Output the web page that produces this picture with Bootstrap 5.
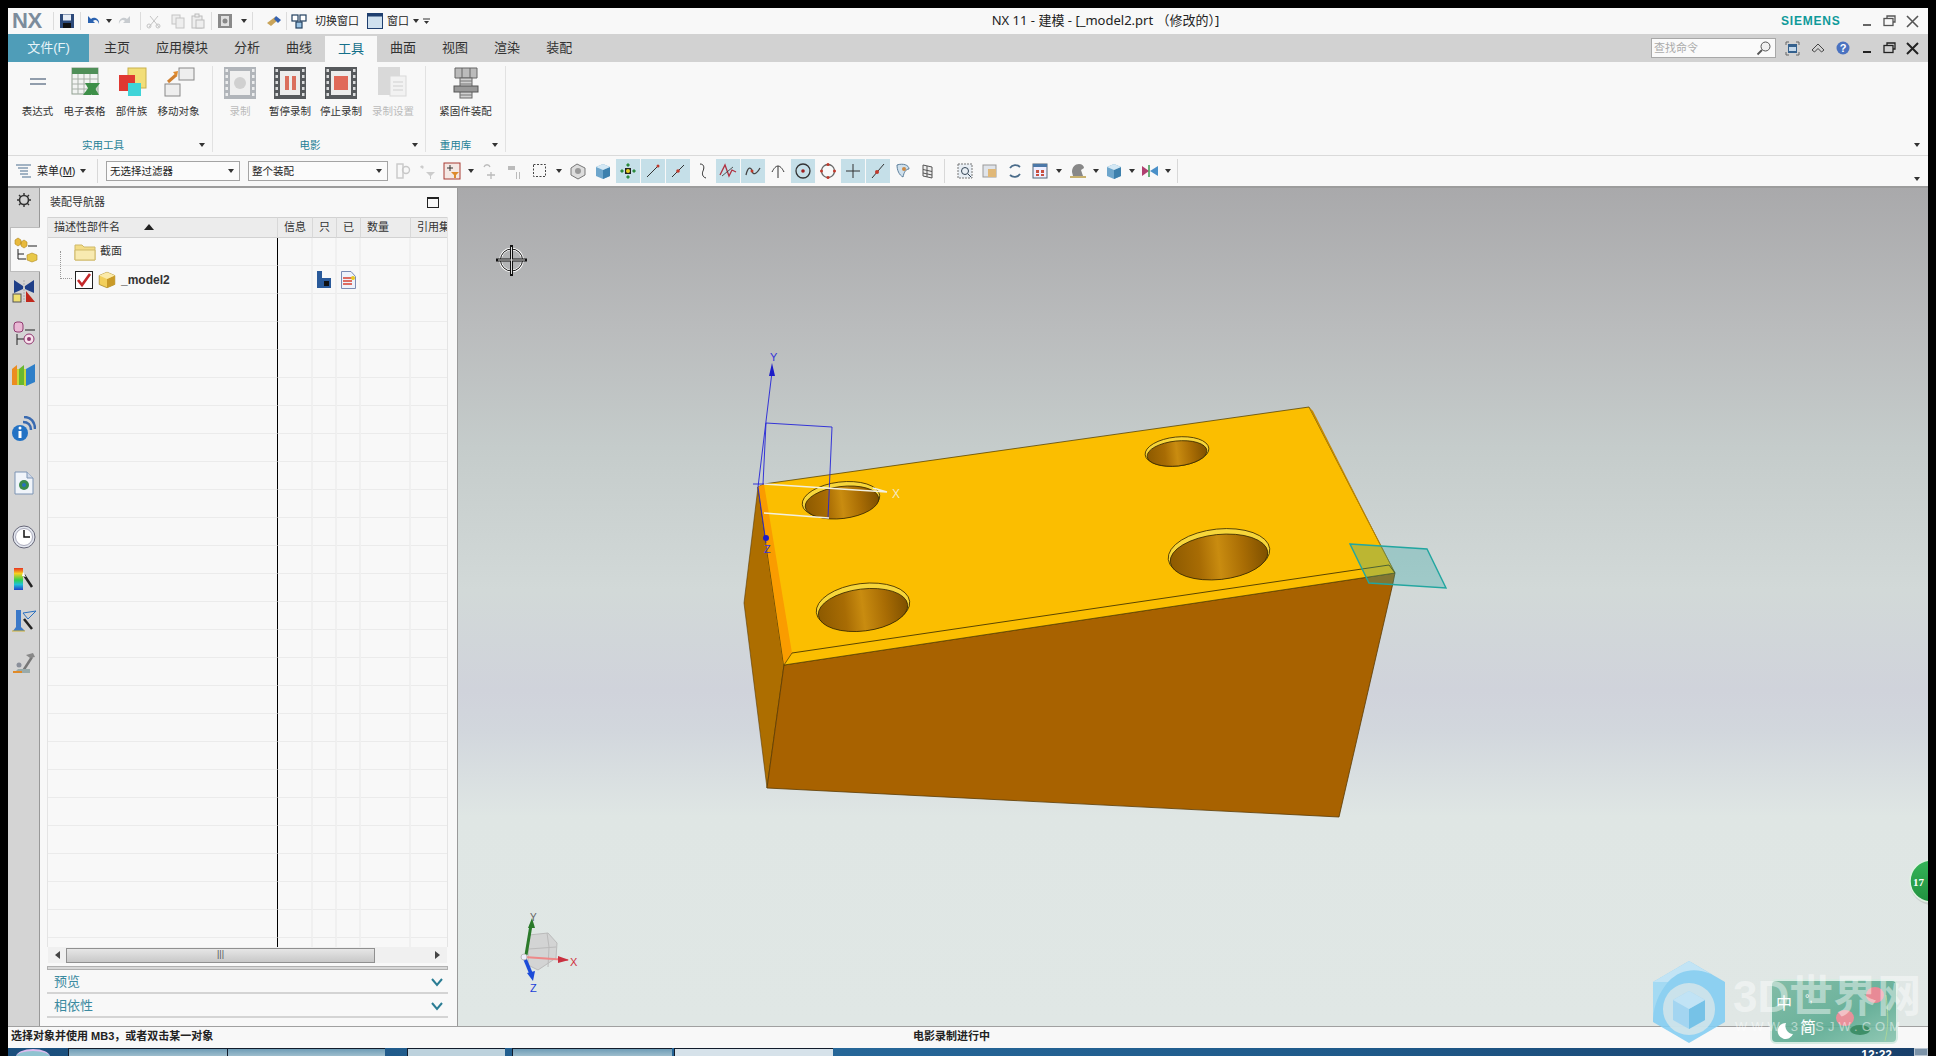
<!DOCTYPE html>
<html lang="zh">

<head>
    <meta charset="utf-8">
    <meta name="viewport" content="width=device-width, initial-scale=1">
    <title>NX 11 - 建模</title>

    <link href="https://cdn.jsdelivr.net/npm/bootstrap@5.3.3/dist/css/bootstrap.min.css" rel="stylesheet">
    <style>
        html, body { height: 1056px; overflow: hidden; }
        body { background: #000; padding: 8px 8px 0; font-family: "Liberation Sans", "Noto Sans CJK SC", sans-serif; font-size: 11px; color: #333; }
        svg { display: block; flex: none; }
        .nx-app { height: 1048px; position: relative; background: #f8f8f8; }

        /* title row */
        .nx-title { height: 26px; background: #f8f8f8; flex: none; }
        .nx-logo { font: bold 22px "Liberation Sans", sans-serif; color: #7c8c9c; margin-left: 4px; width: 36px; letter-spacing: -.5px; }
        .qa-sep { width: 1px; height: 18px; background: #dcdcdc; margin: 0 5px; flex: none; }
        .qa-text { font-size: 11px; color: #222; }
        .nx-caption { font-family: "Noto Sans", "Noto Sans CJK SC", sans-serif; font-size: 13px; color: #222; text-align: center; }
        .nx-brand { font: bold 12px "Liberation Sans", sans-serif; color: #0f9a9a; letter-spacing: .8px; width: 74px; }
        .win-btn { width: 23px; display: flex; justify-content: center; }

        /* ribbon tabs */
        .nx-tabs { height: 28px; background: #d2d2d2; flex: none; }
        .nx-file { width: 81px; background: #4f9db8; color: #e8f4f8; font-size: 13px; line-height: 28px; text-align: center; margin-right: 2px; }
        .nx-tab { padding: 0 13px; font-size: 13px; line-height: 28px; color: #333; }
        .nx-tab-on { background: #f8f8f8; color: #14708a; margin-top: 2px; line-height: 26px; }
        .nx-search { width: 125px; height: 20px; background: #fafafa; border: 1px solid #a8a8a8; color: #aaa; padding-left: 2px; line-height: 18px; }
        .tab-tool { width: 25px; display: flex; justify-content: center; }

        /* ribbon body */
        .nx-ribbon { height: 94px; background: #f8f8f8; border-bottom: 1px solid #dadada; flex: none; padding-left: 6px; padding-top: 4px; }
        .rb-group { height: 86px; border-right: 1px solid #e2e2e2; }
        .rb-g1 { width: 199px; }
        .rb-g2 { width: 213px; padding-left: 2px; }
        .rb-g3 { width: 80px; }
        .rb-items { height: 72px; }
        .rb-btn { width: 47px; text-align: center; color: #333; font-size: 10.5px; line-height: 14px; white-space: nowrap; }
        .rb-wide { width: 50px; }
        .rb-wide2 { width: 52px; }
        .rb-last { width: 79px; }
        .rb-btn svg { margin: 0 auto 4px; }
        .rb-off { color: #bbb; }
        .rb-label { color: #1d7f96; font-size: 10.5px; line-height: 14px; }
        .rb-caret { width: 20px; display: flex; justify-content: center; align-items: center; }
        .caret-dn { width: 0; height: 0; border-left: 3px solid transparent; border-right: 3px solid transparent; border-top: 4px solid #333; }

        /* selection bar */
        .nx-select { height: 32px; background: #f8f8f8; border-bottom: 2px solid #9c9c9c; flex: none; padding-left: 7px; }
        .sel-menu { width: 79px; font-size: 11px; color: #222; }
        .sel-box { height: 20px; background: #fbfbfb; border: 1px solid #a4a4a4; font-size: 10.5px; color: #222; padding: 0 5px 0 3px; line-height: 18px; }
        .sel-wide { width: 134px; margin-right: 8px; }
        .sel-wider { width: 140px; margin-right: 2px; }
        .tb { width: 24px; height: 24px; margin-right: 1px; display: flex; align-items: center; justify-content: center; flex: none; }
        .tb-on { background: #c5dfe8; }
        .tb-a { width: 12px; margin-right: 1px; display: flex; justify-content: center; flex: none; }
        .tb-tight { width: 10px; }
        .tb-sep { width: 1px; height: 24px; background: #d8d8d8; margin: 0 8px 0 3px; flex: none; }

        /* left resource bar */
        .nx-main { min-height: 0; }
        .res-bar { width: 32px; background: #d4d4d4; border-right: 1px solid #999; flex: none; padding-top: 4px; }
        .res-gear { margin-bottom: 19px; }
        .res-tab { height: 45px; background: #f8f8f8; margin: 0 -1px 0 2px; display: flex; align-items: center; justify-content: center; border: 1px solid #bcbcbc; border-right: 0; }
        .res-ico { display: flex; justify-content: center; align-items: center; height: 24px; margin-top: 18px; }
        .res-first { margin-top: 7px; }
        .res-far { margin-top: 30px; }

        /* navigator */
        .nav-panel { width: 418px; background: #f8f8f8; border-right: 1px solid #9a9a9a; flex: none; padding: 0 9px 0 7px; }
        .nav-head { height: 29px; font-size: 11px; color: #333; padding: 0 9px 0 3px; }
        .nav-wrap { height: 730px; border-left: 1px solid #e4e4e4; border-right: 1px solid #e4e4e4; overflow: hidden; flex: none; }
        .nav-tbl { width: 401px; table-layout: fixed; border-collapse: separate; border-spacing: 0; }
        .nav-tbl th { height: 21px; background: #ececec; font-weight: 400; font-size: 11px; color: #333; padding: 0 0 0 6px; border-top: 1px solid #d2d2d2; border-bottom: 1px solid #d2d2d2; border-right: 1px solid #d8d8d8; white-space: nowrap; overflow: hidden; }
        .nav-tbl td { height: 28px; padding: 0; border-bottom: 1px solid #ebebeb; border-right: 2px solid #f0f0f0; font-size: 11px; }
        .nav-tbl td.col-tree { border-right: 1px solid #000; }
        .sort-up { width: 0; height: 0; border-left: 5px solid transparent; border-right: 5px solid transparent; border-bottom: 6px solid #222; margin-left: 24px; display: inline-block; vertical-align: 1px; }
        .tree-row { padding-left: 26px; }
        .tree-root { padding-left: 27px; position: relative; font-size: 12px; }
        .tree-guide { position: absolute; left: 12px; top: -19px; width: 12px; height: 28px; border-left: 1px dotted #999; border-bottom: 1px dotted #999; }
        .hscroll { height: 16px; background: #f0f0f0; margin: 0 1px; padding: 0 6px; flex: none; }
        .hscroll-thumb { width: 309px; height: 15px; margin-left: 6px; border: 1px solid #909090; background: linear-gradient(#e6e6e6, #c8c8c8); text-align: center; line-height: 11px; color: #555; font-size: 9px; }
        .nav-rule { height: 4px; background: #d8d8d8; border: 1px solid #b0b0b0; margin-top: 3px; flex: none; }
        .nav-fold { height: 24px; border-bottom: 2px solid #d4d4d4; color: #3b8aa0; font-size: 13px; padding: 2px 5px 0 7px; flex: none; }

        .nx-view { min-width: 0; background: linear-gradient(#a9a9ab 0, #babcbd 17%, #c5cccb 31%, #d2d9d8 48%, #d0d3db 60%, #d2d7dd 65%, #dfe6e4 75%, #e0e7e5 100%); }

        /* status */
        .nx-status { height: 22px; border-top: 1px solid #a0a0a0; background: #f8f8f8; flex: none; font-size: 11px; color: #222; line-height: 19px; padding-left: 3px; }
        .status-main { width: 902px; font-weight: 700; }
        .status-note { font-weight: 700; }

        /* taskbar cut by the window edge */
        .nx-taskbar { height: 8px; background: linear-gradient(90deg, #1a4e7c, #27689a 40%, #1f5a8a 70%, #183f6a); flex: none; overflow: hidden; }
        .task-orb { width: 34px; height: 16px; border-radius: 50%; background: #8fc3d0; margin: 1px 18px 0 8px; flex: none; border-top: 2px solid #dbe; }
        .task-btn { height: 8px; border-top: 1px solid #111c2c; border-left: 1px solid #111c2c; background: linear-gradient(#6f9db6, #9dbdcd); flex: none; }
        .task-a { width: 159px; }
        .task-b { width: 158px; }
        .task-c { width: 98px; margin-left: 22px; background: #bdd2dd; }
        .task-d { width: 160px; margin-left: 7px; }
        .task-e { width: 159px; margin-left: 2px; background: #d6e2ea; }
        .task-clock { color: #fff; font-size: 12px; line-height: 14px; margin-left: auto; margin-right: 22px; font-weight: 700; }
        .task-show { width: 14px; background: #7c93a8; border: 1px solid #b8c4d0; flex: none; }

        .nx-overlay { position: absolute; left: 1632px; top: 842px; pointer-events: none; }
    </style>
</head>

<body>
    <svg width="0" height="0" class="position-absolute">
        <defs>
            <symbol id="film" viewBox="0 0 34 34">
                <rect x="1" y="1" width="32" height="32" fill="currentColor" />
                <g fill="#fff" fill-opacity=".8">
                    <rect x="2.500" y="3" width="2.500" height="3" /><rect x="2.500" y="9" width="2.500" height="3" /><rect x="2.500" y="15" width="2.500" height="3" /><rect x="2.500" y="21" width="2.500" height="3" /><rect x="2.500" y="27" width="2.500" height="3" />
                    <rect x="29" y="3" width="2.500" height="3" /><rect x="29" y="9" width="2.500" height="3" /><rect x="29" y="15" width="2.500" height="3" /><rect x="29" y="21" width="2.500" height="3" /><rect x="29" y="27" width="2.500" height="3" />
                </g>
                <rect x="7" y="5" width="20" height="24" fill="#e8e8e8" />
            </symbol>
            <symbol id="cube" viewBox="0 0 18 18">
                <path d="M2 5 9 2l7 3v8l-7 3-7-3z" fill="#f2cf5c" stroke="#a98a2c" stroke-width=".7" />
                <path d="M9 8v8l7-3V5z" fill="#c99a28" />
                <path d="M2 5l7 3 7-3-7-3z" fill="#fbeaa8" />
            </symbol>
            <symbol id="blue-cube" viewBox="0 0 18 18">
                <path d="M2 5 9 2l7 3v9l-7 3-7-3z" fill="#6ea6cc" />
                <path d="M9 8v9l7-3V5z" fill="#3d80ad" />
                <path d="M2 5l7 3 7-3-7-3z" fill="#d4e8f4" />
            </symbol>
            <linearGradient id="wall" x1="0" x2="1" y1="0" y2="0">
                <stop offset="0" stop-color="#8d5a00" /><stop offset=".3" stop-color="#a86c04" /><stop offset=".5" stop-color="#c98c10" /><stop offset=".75" stop-color="#a86c04" /><stop offset="1" stop-color="#7e5000" />
            </linearGradient>
        </defs>
    </svg>

    <div class="nx-app d-flex flex-column">
        <!-- title row -->
        <div class="nx-title d-flex align-items-center">
            <div class="nx-logo">NX</div>
            <div class="qa-sep"></div>
            <svg width="16" height="16" viewBox="0 0 16 16"><path d="M1 1h14v14H1z" fill="#2d4a7a" /><rect x="4" y="1.500" width="8" height="6" fill="#e8eef6" /><rect x="4" y="10" width="8" height="5" fill="#111" /></svg>
            <div class="qa-sep"></div>
            <svg width="16" height="16" viewBox="0 0 16 16"><path d="M2 3v7h7L7 8c2-2 5-1 6 3 1-5-5-8-8-5z" fill="#2a62b0" /></svg>
            <div class="caret-dn ms-1"></div>
            <svg class="ms-1" width="16" height="16" viewBox="0 0 16 16"><path d="M14 3v7H7l2-2C7 6 4 7 3 11c-1-5 5-8 8-5z" fill="#c8ccd0" /></svg>
            <div class="qa-sep ms-2"></div>
            <svg width="16" height="16" viewBox="0 0 16 16" fill="none" stroke="#c4c4c4"><path d="M3 14 12 3M13 14 4 3" /><circle cx="3" cy="13" r="2" /><circle cx="12" cy="13" r="2" /></svg>
            <svg class="ms-2" width="16" height="16" viewBox="0 0 16 16" fill="#eee" stroke="#c4c4c4"><rect x="2" y="2" width="8" height="9" /><rect x="6" y="5" width="8" height="10" /></svg>
            <svg class="ms-1" width="16" height="16" viewBox="0 0 16 16" fill="#eee" stroke="#bcbcbc"><rect x="2" y="3" width="10" height="12" /><rect x="5" y="1" width="4" height="3" /><rect x="6" y="7" width="8" height="8" /></svg>
            <div class="qa-sep"></div>
            <svg width="16" height="16" viewBox="0 0 16 16"><rect x="1" y="1" width="14" height="14" fill="#8a8a8a" /><rect x="4" y="3" width="8" height="10" fill="#e0e0e0" /><circle cx="8" cy="8" r="2.500" fill="#888" /></svg>
            <div class="caret-dn ms-2"></div>
            <div class="qa-sep"></div>
            <svg class="ms-2" width="16" height="16" viewBox="0 0 16 16"><path d="M1 10 9 4l3 3-7 6z" fill="#c9a45a" /><path d="M10 3l5 4-3 3-4-4z" fill="#3562b0" /></svg>
            <div class="qa-sep ms-1 me-1"></div>
            <svg width="16" height="16" viewBox="0 0 16 16" fill="#fff" stroke="#22405f" stroke-width="1.200"><rect x="1" y="2" width="6" height="6" /><rect x="9" y="2" width="6" height="6" /><rect x="5" y="9" width="6" height="6" fill="#9cc4e4" /></svg>
            <span class="qa-text ms-2">切换窗口</span>
            <svg class="ms-2" width="16" height="16" viewBox="0 0 16 16"><rect x=".5" y=".5" width="15" height="15" fill="#cfe0ee" stroke="#1f3f6f" /><rect x="1" y="1" width="14" height="2.500" fill="#1f3f6f" /></svg>
            <span class="qa-text ms-1">窗口</span>
            <div class="caret-dn ms-1"></div>
            <svg class="ms-1" width="7" height="7" viewBox="0 0 7 7"><path d="M0 1h7" stroke="#333" /><path d="M1 3h5L3.500 6z" fill="#333" /></svg>
            <div class="nx-caption flex-grow-1">NX 11 - 建模 - [_model2.prt （修改的）]</div>
            <div class="nx-brand">SIEMENS</div>
            <div class="win-btn"><svg width="12" height="12" viewBox="0 0 12 12"><rect x="2" y="9" width="8" height="2" fill="#666" /></svg></div>
            <div class="win-btn"><svg width="13" height="12" viewBox="0 0 13 12" fill="none" stroke="#555" stroke-width="1.300"><path d="M4 3V1h8v6h-2" /><rect x="1" y="3.500" width="9" height="7" /></svg></div>
            <div class="win-btn me-1"><svg width="13" height="13" viewBox="0 0 13 13" stroke="#555" stroke-width="1.600"><path d="M1 1l11 11M12 1 1 12" /></svg></div>
        </div>

        <!-- ribbon tabs -->
        <div class="nx-tabs d-flex">
            <div class="nx-file">文件(F)</div>
            <div class="nx-tab">主页</div>
            <div class="nx-tab">应用模块</div>
            <div class="nx-tab">分析</div>
            <div class="nx-tab">曲线</div>
            <div class="nx-tab nx-tab-on">工具</div>
            <div class="nx-tab">曲面</div>
            <div class="nx-tab">视图</div>
            <div class="nx-tab">渲染</div>
            <div class="nx-tab">装配</div>
            <div class="ms-auto d-flex align-items-center me-1">
                <div class="nx-search d-flex justify-content-between align-items-center">查找命令
                    <svg class="me-1" width="15" height="15" viewBox="0 0 15 15" fill="#f0f0f0" stroke="#555"><circle cx="9.500" cy="5.500" r="4.500" /><path d="M6 9 1.500 13.500" stroke-width="1.800" /></svg>
                </div>
                <div class="tab-tool ms-1"><svg width="15" height="15" viewBox="0 0 15 15"><path d="M1 4V1h3M11 1h3v3M14 11v3h-3M4 14H1v-3" fill="none" stroke="#666" /><rect x="3" y="3" width="9" height="9" fill="#34618e" /><rect x="4" y="6" width="7" height="4" fill="#c4d8ea" /></svg></div>
                <div class="tab-tool"><svg width="14" height="12" viewBox="0 0 14 12" fill="none" stroke="#444"><path d="M1 8l6-6 6 6-2.500 2L7 6.500 3.500 10z" /></svg></div>
                <div class="tab-tool"><svg width="14" height="14" viewBox="0 0 14 14"><circle cx="7" cy="7" r="6.500" fill="#4a72c0" /><text x="7" y="11" text-anchor="middle" font-family="Liberation Sans" font-weight="700" font-size="11" fill="#fff">?</text></svg></div>
                <div class="win-btn"><svg width="12" height="12" viewBox="0 0 12 12"><rect x="2" y="9" width="8" height="2" fill="#222" /></svg></div>
                <div class="win-btn"><svg width="13" height="12" viewBox="0 0 13 12" fill="none" stroke="#222" stroke-width="1.300"><path d="M4 3V1h8v6h-2" /><rect x="1" y="3.500" width="9" height="7" /></svg></div>
                <div class="win-btn"><svg width="13" height="13" viewBox="0 0 13 13" stroke="#222" stroke-width="2"><path d="M1 1l11 11M12 1 1 12" /></svg></div>
            </div>
        </div>

        <!-- ribbon -->
        <div class="nx-ribbon d-flex">
            <div class="rb-group rb-g1 d-flex flex-column">
                <div class="rb-items d-flex">
                    <div class="rb-btn">
                        <svg width="34" height="34" viewBox="0 0 34 34"><path d="M9 13h16M9 18h16" stroke="#6f7f92" stroke-width="1.400" /></svg>表达式
                    </div>
                    <div class="rb-btn">
                        <svg width="34" height="34" viewBox="0 0 34 34"><rect x="4" y="2" width="26" height="26" fill="#f2f4f2" stroke="#90a090" /><rect x="4" y="2" width="26" height="6" fill="#4f8f58" /><path d="M4 13h26M4 18h26M4 23h26M10 8v20M16 8v20M22 8v20" stroke="#a8b0a8" /><path d="M15 29l9-12h8l-9 12z" fill="#3d8f48" /><path d="M17 17h7l7 12h-7z" fill="#3d8f48" /></svg>电子表格
                    </div>
                    <div class="rb-btn">
                        <svg width="34" height="34" viewBox="0 0 34 34"><rect x="13" y="2" width="18" height="20" fill="#f2de78" stroke="#c8b04c" /><rect x="4" y="9" width="16" height="16" fill="#e03832" /><rect x="13" y="17" width="13" height="13" fill="#3fd4d8" /></svg>部件族
                    </div>
                    <div class="rb-btn">
                        <svg width="34" height="34" viewBox="0 0 34 34"><rect x="17" y="2" width="15" height="12" fill="#eee" stroke="#888" /><rect x="3" y="18" width="15" height="12" fill="#eee" stroke="#888" /><path d="M6 16l8-7" stroke="#d08030" stroke-width="3" /><path d="M11 6l5-1-1 6z" fill="#e08b2e" /></svg>移动对象
                    </div>
                </div>
                <div class="d-flex"><div class="rb-label flex-grow-1 text-center">实用工具</div><div class="rb-caret"><div class="caret-dn"></div></div></div>
            </div>
            <div class="rb-group rb-g2 d-flex flex-column">
                <div class="rb-items d-flex">
                    <div class="rb-btn rb-wide rb-off">
                        <svg class="text-secondary opacity-50" width="34" height="34"><use href="#film" /><circle cx="17" cy="17" r="6" fill="#aaa" /></svg>录制
                    </div>
                    <div class="rb-btn rb-wide">
                        <svg class="text-dark opacity-75" width="34" height="34"><use href="#film" /><rect x="12" y="10" width="4" height="14" fill="#d0402a" /><rect x="19" y="10" width="4" height="14" fill="#d0402a" /></svg>暂停录制
                    </div>
                    <div class="rb-btn rb-wide2">
                        <svg class="text-dark opacity-75" width="34" height="34"><use href="#film" /><rect x="10" y="10" width="14" height="14" fill="#d83a24" /></svg>停止录制
                    </div>
                    <div class="rb-btn rb-wide2 rb-off">
                        <svg class="text-secondary opacity-50" width="34" height="34"><rect x="2" y="1" width="22" height="28" fill="#bbb" /><rect x="14" y="10" width="16" height="20" fill="#eee" stroke="#bbb" /><path d="M17 16h10M17 20h10M17 24h10" stroke="#aaa" /></svg>录制设置
                    </div>
                </div>
                <div class="d-flex"><div class="rb-label flex-grow-1 text-center">电影</div><div class="rb-caret"><div class="caret-dn"></div></div></div>
            </div>
            <div class="rb-group rb-g3 d-flex flex-column">
                <div class="rb-items d-flex">
                    <div class="rb-btn rb-last">
                        <svg width="34" height="34" viewBox="0 0 34 34"><path d="M6 2h22v10H6z" fill="#bbb" stroke="#666" /><path d="M13 2v10M21 2v10" stroke="#666" /><rect x="11" y="12" width="12" height="20" fill="#d0d0d0" stroke="#666" /><rect x="5" y="20" width="24" height="6" fill="#999" stroke="#555" /><path d="M11 15h12M11 18h12M11 29h12" stroke="#777" /></svg>紧固件装配
                    </div>
                </div>
                <div class="d-flex"><div class="rb-label flex-grow-1 text-center">重用库</div><div class="rb-caret"><div class="caret-dn"></div></div></div>
            </div>
            <div class="ms-auto d-flex align-items-end pb-2 me-2"><div class="caret-dn"></div></div>
        </div>

        <!-- selection bar -->
        <div class="nx-select d-flex align-items-center">
            <div class="sel-menu d-flex align-items-center">
                <svg class="me-1" width="18" height="18" viewBox="0 0 18 18" fill="none" stroke="#4d6f8f"><path d="M1 3h15M3 6h10M5 9h8M5 12h8M7 15h9" /></svg>菜单(<u>M</u>)
                <div class="caret-dn ms-1"></div>
            </div>
            <div class="tb-sep"></div>
            <div class="sel-box sel-wide d-flex justify-content-between align-items-center">无选择过滤器<div class="caret-dn"></div></div>
            <div class="sel-box sel-wider d-flex justify-content-between align-items-center">整个装配<div class="caret-dn"></div></div>
            <div class="tb"><svg width="18" height="18" viewBox="0 0 18 18" fill="none" stroke="#c8c8c8" stroke-width="1.400"><rect x="4" y="2" width="6" height="14" /><circle cx="13" cy="8" r="3.500" /></svg></div>
            <div class="tb"><svg width="18" height="18" viewBox="0 0 18 18" fill="#ccc"><path d="M2 5c2-3 5-1 3 2zM8 10h9l-4 4v3h-1v-3z" /></svg></div>
            <div class="tb"><svg width="18" height="18" viewBox="0 0 18 18"><rect x="1" y="1" width="16" height="16" fill="#f4e8e4" stroke="#a83a32" /><path d="M4 6h6M7 3v6" stroke="#333" /><path d="M8 10h8l-3 3v3h-2v-3z" fill="#dd8a2c" /></svg></div>
            <div class="tb-a"><div class="caret-dn"></div></div>
            <div class="tb"><svg width="18" height="18" viewBox="0 0 18 18" fill="none" stroke="#bbb" stroke-width="1.300"><path d="M3 5c1-3 5-3 6 0M10 10v7M6 13h8" /></svg></div>
            <div class="tb"><svg width="18" height="18" viewBox="0 0 18 18" fill="#bbb"><path d="M2 4h7v4H2zM10 10v7h1v-7zM13 10v7h1v-7z" /></svg></div>
            <div class="tb"><svg width="18" height="18" viewBox="0 0 18 18" fill="none" stroke="#444" stroke-dasharray="2 1.500"><rect x="2.500" y="2.500" width="12" height="12" /></svg></div>
            <div class="tb-a"><div class="caret-dn"></div></div>
            <div class="tb"><svg width="18" height="18" viewBox="0 0 18 18"><path d="M2 6 8 2l8 4v7l-7 4-7-4z" fill="#ddd" stroke="#777" /><circle cx="9" cy="9" r="3" fill="#999" /></svg></div>
            <div class="tb"><svg width="18" height="18"><use href="#blue-cube" /></svg></div>
            <div class="tb tb-on"><svg width="18" height="18" viewBox="0 0 18 18"><path d="M9 1l2 2-2 2-2-2zM15 7l2 2-2 2-2-2zM3 7l2 2-2 2-2-2zM9 13l2 2-2 2-2-2z" fill="#2a8a3c" /><path d="M6 6h6v6H6z" fill="#222" /><circle cx="9" cy="9" r="2" fill="#e8d020" /></svg></div>
            <div class="tb tb-on"><svg width="18" height="18" viewBox="0 0 18 18"><path d="M3 15 15 3" stroke="#333" /><circle cx="14" cy="4" r="1.500" fill="#c0392b" /></svg></div>
            <div class="tb tb-on"><svg width="18" height="18" viewBox="0 0 18 18"><path d="M3 15 15 3" stroke="#333" /><circle cx="9" cy="9" r="1.800" fill="#c0392b" /></svg></div>
            <div class="tb"><svg width="18" height="18" viewBox="0 0 18 18" fill="none" stroke="#333"><path d="M6 2c5 0 4 5 3 7s-1 6 3 7" /></svg></div>
            <div class="tb tb-on"><svg width="18" height="18" viewBox="0 0 18 18" fill="none" stroke="#b03040" stroke-width="1.300"><path d="M1 13 6 3l4 11 3-6 4 2" /><path d="M3 14 14 5" stroke="#333" stroke-width=".8" /></svg></div>
            <div class="tb tb-on"><svg width="18" height="18" viewBox="0 0 18 18" fill="none" stroke="#444" stroke-width="1.300"><path d="M2 13c2-9 5-8 6-4s4 4 8-3" /><circle cx="8" cy="9" r="1.500" fill="#c0392b" stroke="none" /></svg></div>
            <div class="tb"><svg width="18" height="18" viewBox="0 0 18 18" fill="none" stroke="#333"><path d="M9 16V4M3 10c2-4 4-6 6-6s4 2 6 6" /></svg></div>
            <div class="tb tb-on"><svg width="18" height="18" viewBox="0 0 18 18" fill="none" stroke="#333"><circle cx="9" cy="9" r="7" stroke-width="1.300" /><circle cx="9" cy="9" r="1.800" fill="#a02020" stroke="none" /></svg></div>
            <div class="tb"><svg width="18" height="18" viewBox="0 0 18 18" fill="none" stroke="#666" stroke-width="1.300"><circle cx="9" cy="9" r="6.500" /><circle cx="9" cy="2.500" r="1.500" fill="#c0392b" stroke="none" /><circle cx="9" cy="15.500" r="1.500" fill="#c0392b" stroke="none" /><circle cx="2.500" cy="9" r="1.500" fill="#c0392b" stroke="none" /><circle cx="15.500" cy="9" r="1.500" fill="#c0392b" stroke="none" /></svg></div>
            <div class="tb tb-on"><svg width="18" height="18" viewBox="0 0 18 18" stroke="#333"><path d="M9 2v14M2 9h14" /></svg></div>
            <div class="tb tb-on"><svg width="18" height="18" viewBox="0 0 18 18"><path d="M3 16 15 2" stroke="#333" /><circle cx="8" cy="10" r="2" fill="#c0392b" /></svg></div>
            <div class="tb"><svg width="18" height="18" viewBox="0 0 18 18"><path d="M3 3c6-2 12 0 12 4-3 0-5 3-6 8-4-2-6-7-6-12z" fill="#cfe0ec" stroke="#5c7f9c" /><circle cx="10" cy="7" r="2" fill="#c84" /></svg></div>
            <div class="tb"><svg width="18" height="18" viewBox="0 0 18 18" fill="#eee" stroke="#555"><path d="M4 3l9 2v11l-9-2zM4 7.500l9 2M4 11l9 2M8 4v11" /></svg></div>
            <div class="tb-sep"></div>
            <div class="tb"><svg width="18" height="18" viewBox="0 0 18 18"><rect x="2" y="2" width="14" height="14" fill="#e8eef4" stroke="#777" stroke-dasharray="2 1" /><circle cx="9" cy="9" r="3.500" fill="none" stroke="#345" /><path d="M12 12l3 3" stroke="#345" /></svg></div>
            <div class="tb"><svg width="18" height="18" viewBox="0 0 18 18"><rect x="2" y="3" width="13" height="12" fill="#e0e4ea" stroke="#999" /><rect x="7" y="7" width="8" height="8" fill="#e0b878" /></svg></div>
            <div class="tb"><svg width="18" height="18" viewBox="0 0 18 18" fill="none" stroke="#4a6c8a" stroke-width="1.800"><path d="M14 5a6.500 6.500 0 0 0-10 1M4 13a6.500 6.500 0 0 0 10-1" /></svg></div>
            <div class="tb"><svg width="18" height="18" viewBox="0 0 18 18"><rect x="2" y="2" width="14" height="14" fill="#eef" stroke="#567" /><rect x="2" y="2" width="14" height="3" fill="#4b78a8" /><path d="M5 8h3v3H5zM10 8h3v3h-3zM5 12h3v2H5zM10 12h3v2h-3z" fill="#c85040" /></svg></div>
            <div class="tb-a"><div class="caret-dn"></div></div>
            <div class="tb"><svg width="18" height="18" viewBox="0 0 18 18"><path d="M3 10c0-5 3-8 7-8 3 0 5 2 5 4l-3 2 2 6H4z" fill="#888" /><path d="M1 15h16" stroke="#b89a40" stroke-width="1.500" /></svg></div>
            <div class="tb-a tb-tight"><div class="caret-dn"></div></div>
            <div class="tb"><svg width="18" height="18"><use href="#blue-cube" /></svg></div>
            <div class="tb-a tb-tight"><div class="caret-dn"></div></div>
            <div class="tb"><svg width="18" height="18" viewBox="0 0 18 18"><path d="M1 4l7 5-7 5z" fill="#b04070" /><path d="M9 9l8-5v10z" fill="#4a90c8" /><path d="M8 3v12" stroke="#3a9a50" stroke-width="1.500" /></svg></div>
            <div class="tb-a tb-tight"><div class="caret-dn"></div></div>
            <div class="tb-sep"></div>
            <div class="ms-auto me-2 mt-3"><div class="caret-dn"></div></div>
        </div>

        <!-- main area -->
        <div class="nx-main d-flex flex-grow-1">
            <div class="res-bar">
                <div class="d-flex justify-content-center res-gear"><svg width="16" height="16" viewBox="0 0 16 16" fill="none" stroke="#333"><circle cx="8" cy="8" r="4.500" stroke-width="1.600" /><path d="M8 1v3M8 12v3M1 8h3M12 8h3M3 3l2 2M11 11l2 2M13 3l-2 2M5 11l-2 2" stroke-width="1.400" /></svg></div>
                <div class="res-tab">
                    <svg width="24" height="26" viewBox="0 0 24 26"><path d="M1 3l3-2 3 2v4l-3 2-3-2zM7 5l3-2 3 2v4l-3 2-3-2z" fill="#e8b93c" stroke="#b08820" stroke-width=".6" /><path d="M4 12v10h8M4 17h6" fill="none" stroke="#222" /><path d="M14 9h9" stroke="#222" /><path d="M13 18l5-2 5 2v5l-5 2-5-2z" fill="#e8c848" stroke="#b08820" stroke-width=".6" /></svg>
                </div>
                <div class="res-ico res-first"><svg width="24" height="24" viewBox="0 0 24 24"><path d="M2 1l9 6v3L2 14zM22 1l-9 6v3l9 4z" fill="#1f3f88" /><rect x="1" y="15" width="8" height="8" fill="#f0e070" stroke="#555" /><path d="M14 12l9 11H14z" fill="#c0281c" /><path d="M12 1v22" stroke="#aaa" stroke-dasharray="2 1" /></svg></div>
                <div class="res-ico"><svg width="24" height="25" viewBox="0 0 24 25"><rect x="2" y="1" width="9" height="10" rx="3" fill="#e9b8d4" stroke="#903a70" /><path d="M13 9h10M5 13v11M5 18h8" fill="none" stroke="#222" /><circle cx="17" cy="18" r="5" fill="#f8e0ec" stroke="#903a70" /><circle cx="17" cy="18" r="2" fill="#903a70" /></svg></div>
                <div class="res-ico"><svg width="25" height="24" viewBox="0 0 25 24"><path d="M1 6l5-4v20H1z" fill="#ec8c20" /><path d="M8 6l5-4v20H8z" fill="#6ab82e" /><path d="M15 6l9-5v18l-9 4z" fill="#2e7fc8" /><path d="M6 6h2v16H6zM13 6h2v17h-2z" fill="#c8d838" /></svg></div>
                <div class="res-ico res-far"><svg width="25" height="26" viewBox="0 0 25 26"><circle cx="9" cy="17" r="8" fill="#2372c4" /><circle cx="9" cy="12" r="1.500" fill="#fff" /><rect x="7.500" y="15" width="3" height="7" fill="#fff" /><path d="M12 6c5 0 8 3 8 8M13 1c7 0 11 5 11 12" fill="none" stroke="#3a6ab0" stroke-width="2.500" /></svg></div>
                <div class="res-ico res-far"><svg width="20" height="24" viewBox="0 0 20 24"><path d="M1 1h12l6 6v16H1z" fill="#f0f4fa" stroke="#7c94b4" /><path d="M13 1v6h6" fill="#cfd8e8" stroke="#7c94b4" /><circle cx="10" cy="14" r="5" fill="#3a8a4c" /><circle cx="10" cy="14" r="2" fill="#2a70c0" /></svg></div>
                <div class="res-ico res-far"><svg width="24" height="24" viewBox="0 0 24 24"><circle cx="12" cy="12" r="11" fill="#e4e8f0" stroke="#667" /><circle cx="12" cy="12" r="8.500" fill="#fff" stroke="#aab" /><path d="M12 5v7h6" fill="none" stroke="#111" stroke-width="1.500" /></svg></div>
                <div class="res-ico"><svg width="24" height="24" viewBox="0 0 24 24"><defs><linearGradient id="spec" x1="0" x2="0" y1="0" y2="1"><stop offset="0" stop-color="#e83020" /><stop offset=".25" stop-color="#f8d020" /><stop offset=".55" stop-color="#30d050" /><stop offset=".75" stop-color="#20c0d8" /><stop offset="1" stop-color="#2040c8" /></linearGradient></defs><rect x="2" y="1" width="9" height="22" fill="url(#spec)" /><path d="M12 8l8 12" stroke="#222" stroke-width="2.500" /><path d="M11 5l3 5-4-1z" fill="#fff" /></svg></div>
                <div class="res-ico"><svg width="26" height="24" viewBox="0 0 26 24"><path d="M5 1h5v17l4 4H2l3-4z" fill="#3a78c8" /><path d="M12 4l13-2-8 8z" fill="none" stroke="#2a70c0" /><path d="M13 10l8 10" stroke="#222" stroke-width="2.500" /><path d="M1 22h13" stroke="#d0b030" /></svg></div>
                <div class="res-ico"><svg width="24" height="24" viewBox="0 0 24 24"><path d="M11 20 20 6" stroke="#777" stroke-width="2.500" /><path d="M14 4l7-2 2 4-5 1z" fill="#888" /><path d="M2 22h16v-4H6z" fill="#9aa" /><path d="M1 21h9" stroke="#e08a28" stroke-width="2" /><circle cx="7" cy="14" r="2.500" fill="#8a8f9a" /></svg></div>
            </div>

            <div class="nav-panel d-flex flex-column">
                <div class="nav-head d-flex align-items-center justify-content-between">
                    装配导航器
                    <svg width="12" height="11" viewBox="0 0 12 11" fill="none" stroke="#222"><rect x=".5" y=".5" width="11" height="10" /><path d="M0 1h12" stroke-width="2" /></svg>
                </div>
                <div class="nav-wrap">
                    <table class="nav-tbl">
                        <colgroup><col><col><col><col><col><col></colgroup>
                        <thead>
                            <tr>
                                <th>描述性部件名<span class="sort-up"></span></th>
                                <th>信息</th>
                                <th>只</th>
                                <th>已</th>
                                <th>数量</th>
                                <th>引用集</th>
                            </tr>
                        </thead>
                        <tbody id="navRows">
                            <tr>
                                <td class="col-tree">
                                    <div class="tree-row d-flex align-items-center gap-1">
                                        <svg width="22" height="19" viewBox="0 0 22 19"><path d="M1 3h7l2 2h11v13H1z" fill="#f3dc86" stroke="#cfb968" /><path d="M1 8h20v10H1z" fill="#f8eab0" stroke="#cfb968" /></svg>
                                        截面
                                    </div>
                                </td>
                                <td></td><td></td><td></td><td></td><td></td>
                            </tr>
                            <tr>
                                <td class="col-tree">
                                    <div class="tree-root d-flex align-items-center">
                                        <span class="tree-guide"></span>
                                        <svg class="me-1" width="18" height="18" viewBox="0 0 18 18"><rect x=".5" y=".5" width="17" height="17" fill="#fff" stroke="#222" /><path d="M3 9l4 5L15 3" fill="none" stroke="#c4282a" stroke-width="2.600" /></svg>
                                        <svg class="me-1" width="20" height="20"><use href="#cube" /></svg>
                                        <strong>_model2</strong>
                                    </div>
                                </td>
                                <td></td>
                                <td><div class="d-flex justify-content-center"><svg width="14" height="17" viewBox="0 0 14 17"><path d="M0 0h5v7h9v10H0z" fill="#2a5a9a" /><rect x="7" y="10" width="5" height="5" fill="#111" /></svg></div></td>
                                <td><div class="d-flex justify-content-center"><svg width="15" height="18" viewBox="0 0 15 18"><path d="M.5.5H10l4.500 5v12H.5z" fill="#eef2fa" stroke="#7c8cb4" /><path d="M2 7h9M2 10h9M2 13h9" stroke="#d84030" stroke-width="1.400" /><circle cx="12" cy="7" r="2" fill="#e8c820" /></svg></div></td>
                                <td></td><td></td>
                            </tr>
                        </tbody>
                    </table>
                </div>
                <div class="hscroll d-flex align-items-center">
                    <svg width="6" height="8" viewBox="0 0 6 8"><path d="M6 0v8L1 4z" fill="#444" /></svg>
                    <div class="hscroll-thumb">|||</div>
                    <svg class="ms-auto" width="6" height="8" viewBox="0 0 6 8"><path d="M0 0v8l5-4z" fill="#444" /></svg>
                </div>
                <div class="nav-rule"></div>
                <div class="nav-fold d-flex align-items-center justify-content-between">预览
                    <svg width="12" height="9" viewBox="0 0 12 9" fill="none" stroke="#2b7d94" stroke-width="2"><path d="M1 1l5 6 5-6" /></svg>
                </div>
                <div class="nav-fold d-flex align-items-center justify-content-between">相依性
                    <svg width="12" height="9" viewBox="0 0 12 9" fill="none" stroke="#2b7d94" stroke-width="2"><path d="M1 1l5 6 5-6" /></svg>
                </div>
            </div>

            <!-- graphics window, coordinates are the page ones -->
            <div class="nx-view flex-grow-1">
                <svg width="1471" height="839" viewBox="457 188 1471 839" font-family="Liberation Sans">
                    <!-- part -->
                    <path d="M757 487 743 603 766 788 783 665z" fill="#ad6e00" stroke="#5a3a00" stroke-width=".6" />
                    <path d="M783 665 1394 573 1392 583 1338 817 766 788z" fill="#a86200" stroke="#5a3a00" stroke-width=".8" />
                    <path d="M763 484 1308 407 1394 573 783 665 757 487z" fill="#fbbe00" stroke="#5a4500" stroke-width=".8" />
                    <path d="M757 487 763 484 791 653 783 665z" fill="#fa9c00" />
                    <path d="M1308 407 1312 411 1394 573 1390 566z" fill="#c68a00" />
                    <path d="M791 653 1388 565 1394 573" fill="none" stroke="#5a4500" stroke-width="1" />
                    <path d="M783 665 791 653" stroke="#5a4500" stroke-width=".8" />

                    <g stroke="#3a2a00" stroke-width=".8">
                        <ellipse cx="840" cy="500" rx="39" ry="18" transform="rotate(-7 840 500)" fill="#f7d63a" />
                        <ellipse cx="841" cy="502.500" rx="37" ry="16" transform="rotate(-7 841 502.500)" fill="url(#wall)" />
                        <ellipse cx="1176" cy="451.500" rx="32" ry="14.500" transform="rotate(-6 1176 451.500)" fill="#f7d63a" />
                        <ellipse cx="1176" cy="453.500" rx="30" ry="12.500" transform="rotate(-6 1176 453.500)" fill="url(#wall)" />
                        <ellipse cx="1218" cy="554" rx="51" ry="25" transform="rotate(-6 1218 554)" fill="#f7d63a" />
                        <ellipse cx="1218" cy="557" rx="49" ry="22.500" transform="rotate(-6 1218 557)" fill="url(#wall)" />
                        <ellipse cx="862" cy="607" rx="47" ry="23.500" transform="rotate(-7 862 607)" fill="#f7d63a" />
                        <ellipse cx="862" cy="610" rx="45" ry="21" transform="rotate(-7 862 610)" fill="url(#wall)" />
                    </g>

                    <!-- datum plane on the corner -->
                    <path d="M1349 544 1426 549 1445 588 1368 583z" fill="#2aa6a6" fill-opacity=".3" stroke="#22a6a0" stroke-width="1.400" />

                    <!-- sketch csys -->
                    <g fill="none" stroke="#2424d8" stroke-width=".9">
                        <path d="M771 372 757 487 765 543" />
                        <path d="M765 423 831 427 827 518" />
                        <path d="M765 423 762 484" />
                        <path d="M752 484h14" />
                    </g>
                    <path d="M771 363 768 376h6z" fill="#1c1cc8" />
                    <circle cx="765" cy="538" r="3" fill="#1c1cc8" />
                    <text x="769" y="361" font-size="11" fill="#3434d8">Y</text>
                    <text x="763" y="553" font-size="11" fill="#3434d8">Z</text>
                    <path d="M763 484 886 492 872 488M763 513 828 518" fill="none" stroke="#f2f0e0" stroke-width="1.400" />
                    <text x="891" y="498" font-size="12" fill="#f3e8c0">X</text>

                    <!-- crosshair -->
                    <g fill="none">
                        <circle cx="510.500" cy="260" r="11" stroke="#fff" stroke-width="2.500" />
                        <circle cx="510.500" cy="260" r="11" stroke="#111" stroke-width="1" />
                        <path d="M510.500 245v31M495 260h31" stroke="#111" stroke-width="3" />
                        <path d="M510.500 247v27M497 260h27" stroke="#ddd" stroke-width="1" />
                    </g>

                    <!-- view triad -->
                    <g>
                        <path d="M528 935l19-2 9 10-1 15-18 12-10-5z" fill="#cfcfcf" fill-opacity=".8" stroke="#bbb" />
                        <path d="M528 949l27-2M546 933l2 14-1 20" fill="none" stroke="#bbb" />
                        <path d="M523 957 567 960" stroke="#e88" stroke-width="2" />
                        <path d="M557 956l11 4-11 3z" fill="#c83040" />
                        <path d="M525 955 530 925" stroke="#2a7a2a" stroke-width="3" />
                        <path d="M531 918l-4 10h7z" fill="#2a7a2a" />
                        <path d="M524 959 531 976" stroke="#1c4cd8" stroke-width="3.500" />
                        <path d="M532 981l-6-8 8-2z" fill="#1c4cd8" />
                        <circle cx="523" cy="957" r="3" fill="#eef" stroke="#bbb" />
                        <text x="529" y="921" font-size="10" fill="#666">Y</text>
                        <text x="569" y="966" font-size="11" fill="#d03040">X</text>
                        <text x="529" y="992" font-size="11" fill="#2040d8">Z</text>
                    </g>
                </svg>
            </div>
        </div>

        <!-- status row -->
        <div class="nx-status d-flex">
            <div class="status-main">选择对象并使用 MB3，或者双击某一对象</div>
            <div class="status-note">电影录制进行中</div>
        </div>

        <!-- taskbar -->
        <div class="nx-taskbar d-flex">
            <div class="task-orb"></div>
            <div class="task-btn task-a"></div>
            <div class="task-btn task-b"></div>
            <div class="task-btn task-c"></div>
            <div class="task-btn task-d"></div>
            <div class="task-btn task-e"></div>
            <div class="task-clock">12:22</div>
            <div class="task-show"></div>
        </div>

        <!-- site watermark and floating widgets over the window -->
        <svg class="nx-overlay" width="288" height="206" viewBox="1640 850 288 206" font-family="Liberation Sans">
            <defs>
                <linearGradient id="ime" x1="0" x2="1" y1="0" y2="1"><stop offset="0" stop-color="#78b8a0" /><stop offset=".6" stop-color="#5cab92" /><stop offset="1" stop-color="#88c4ae" /></linearGradient>
                <linearGradient id="ball" x1="0" x2="0" y1="0" y2="1"><stop offset="0" stop-color="#35b558" /><stop offset="1" stop-color="#21913f" /></linearGradient>
            </defs>
            <!-- green side ball -->
            <circle cx="1932" cy="883" r="22" fill="#888" fill-opacity=".25" />
            <circle cx="1931" cy="881" r="21" fill="url(#ball)" stroke="#dff2e2" stroke-width="1.500" />
            <text x="1913" y="886" font-size="11" font-family="Liberation Serif" font-weight="700" fill="#fff">17</text>
            <!-- logo -->
            <g fill-opacity=".9">
                <path d="M1689 961 1725 982v40l-36 21-36-21v-40z" fill="#84cdf2" />
                <path d="M1689 961 1711 974c-14-6-30-6-43 8l-15 0z" fill="#c8e6f5" />
                <path d="M1653 982h15c-10 12-15 26-15 40z" fill="#a6daf3" />
                <circle cx="1689" cy="1009" r="26" fill="#dfe8e8" fill-opacity=".75" />
                <path d="M1689 991 1705 1000v20l-16 9-16-9v-20z" fill="#9fd4f2" />
                <path d="M1689 1009v20l16-9v-20z" fill="#71c0e6" />
                <path d="M1689 991 1705 1000l-16 9-16-9z" fill="#c4e4f5" />
            </g>
            <!-- lily widget -->
            <rect x="1771" y="980" width="126" height="63" rx="5" fill="url(#ime)" fill-opacity=".9" stroke="#d6ebe2" stroke-width="2" />
            <ellipse cx="1875" cy="995" rx="9" ry="8" fill="#e88a96" />
            <ellipse cx="1845" cy="1018" rx="9" ry="8" fill="#e8909a" />
            <path d="M1886 995c2 16 3 30-1 46" fill="none" stroke="#a8d49a" />
            <ellipse cx="1860" cy="1030" rx="10" ry="5" fill="#3e8f68" />
            <text x="1776" y="1009" font-size="16" font-family="Noto Sans CJK SC" fill="#fff">中</text>
            <text x="1805" y="1002" font-size="11" fill="#fff">°,</text>
            <path d="M1786 1023a8 8 0 1 0 7 11 8 8 0 0 1-7-11z" fill="#fff" />
            <text x="1800" y="1033" font-size="16" font-family="Noto Sans CJK SC" fill="#fff">简</text>
            <!-- site text -->
            <text x="1733" y="1012" font-size="44" font-weight="700" font-family="Liberation Sans, Noto Sans CJK SC" fill="#fff" fill-opacity=".45">3D世界网</text>
            <text x="1735" y="1031" font-size="13" letter-spacing="4" fill="#fff" fill-opacity=".5">WWW.3DSJW.COM</text>
        </svg>
    </div>

    <script>
        // filler rows of the assembly navigator
        const navRows = document.getElementById("navRows");
        for (let i = 0; i < 24; i++) {
            navRows.insertAdjacentHTML("beforeend", '<tr><td class="col-tree"></td><td></td><td></td><td></td><td></td><td></td></tr>');
        }
        const cols = document.querySelectorAll(".nav-tbl col");
        [230, 35, 24, 24, 50, 38].forEach((w, i) => { cols[i].style.width = w + "px"; });
    </script>
    <script src="https://cdn.jsdelivr.net/npm/bootstrap@5.3.3/dist/js/bootstrap.bundle.min.js"></script>
</body>

</html>
